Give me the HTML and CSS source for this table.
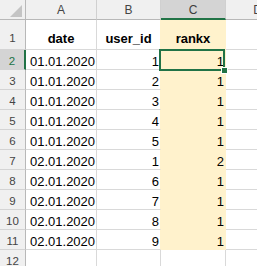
FILE: index.html
```html
<!DOCTYPE html>
<html>
<head>
<meta charset="utf-8">
<link rel="stylesheet" href="styles.css">
</head>
<body>
<div class="sheet">
  <div class="corner"><svg class="tri" width="26" height="20" viewBox="0 0 26 20"><polygon points="22,5 22,17 10,17" fill="#c4c4c4"/></svg></div>
  <div class="ch">A</div><div class="ch">B</div><div class="ch sel">C</div><div class="ch">D</div>

  <div class="rh tall">1</div><div class="c hd">date</div><div class="c hd b">user_id</div><div class="c hd fill">rankx</div><div class="c"></div>

  <div class="rh sel">2</div><div class="c">01.01.2020</div><div class="c num b">1</div><div class="c num fill active">1</div><div class="c"></div>
  <div class="rh">3</div><div class="c">01.01.2020</div><div class="c num b">2</div><div class="c num fill">1</div><div class="c"></div>
  <div class="rh">4</div><div class="c">01.01.2020</div><div class="c num b">3</div><div class="c num fill">1</div><div class="c"></div>
  <div class="rh">5</div><div class="c">01.01.2020</div><div class="c num b">4</div><div class="c num fill">1</div><div class="c"></div>
  <div class="rh">6</div><div class="c">01.01.2020</div><div class="c num b">5</div><div class="c num fill">1</div><div class="c"></div>
  <div class="rh">7</div><div class="c">02.01.2020</div><div class="c num b">1</div><div class="c num fill">2</div><div class="c"></div>
  <div class="rh">8</div><div class="c">02.01.2020</div><div class="c num b">6</div><div class="c num fill">1</div><div class="c"></div>
  <div class="rh">9</div><div class="c">02.01.2020</div><div class="c num b">7</div><div class="c num fill">1</div><div class="c"></div>
  <div class="rh">10</div><div class="c">02.01.2020</div><div class="c num b">8</div><div class="c num fill">1</div><div class="c"></div>
  <div class="rh">11</div><div class="c">02.01.2020</div><div class="c num b">9</div><div class="c num fill">1</div><div class="c"></div>
  <div class="rh">12</div><div class="c"></div><div class="c"></div><div class="c"></div><div class="c"></div>
</div>
</body>
</html>
```

FILE: styles.css
```css
html, body {
  margin: 0;
  padding: 0;
  background: #ffffff;
  overflow: hidden;
}

.sheet {
  display: grid;
  grid-template-columns: 26px 71px 64px 65px 64px;
  grid-template-rows: 20px 30px repeat(11, 20px);
  font-family: "Liberation Sans", Arial, sans-serif;
  font-size: 13px;
  color: #000;
}

.sheet > div {
  box-sizing: border-box;
  border-right: 1px solid #d9d9d9;
  border-bottom: 1px solid #d9d9d9;
  min-width: 0;
  overflow: visible;
  white-space: nowrap;
}

.corner {
  background: #f0f0f0;
  border-right-color: #b8b8b8 !important;
  border-bottom-color: #b8b8b8 !important;
  position: relative;
}

.tri {
  display: block;
}

.ch {
  background: #f0f0f0;
  border-right-color: #d0d0d0 !important;
  border-bottom-color: #b8b8b8 !important;
  display: flex;
  align-items: flex-end;
  justify-content: center;
  font-size: 12px;
  line-height: 15px;
  padding-bottom: 1px;
  color: #444;
}

.ch.sel {
  background: #d4d4d4;
  border-bottom: 2px solid #217346 !important;
  padding-bottom: 0;
  color: #3c3c3c;
}

.rh {
  background: #f0f0f0;
  border-right-color: #b8b8b8 !important;
  border-bottom-color: #d4d4d4 !important;
  display: flex;
  align-items: flex-end;
  justify-content: center;
  font-size: 11.5px;
  line-height: 15px;
  color: #444;
}

.rh.tall {
  padding-bottom: 3px;
}

.rh.sel {
  background: #d4d4d4;
  border-right: 2px solid #217346 !important;
  color: #217346;
}

.c {
  display: flex;
  align-items: flex-end;
  line-height: 15px;
  padding: 0 2px 0 4px;
}

.c.hd {
  justify-content: center;
  font-weight: bold;
  padding: 0 0 3px 0;
}

.c.num {
  justify-content: flex-end;
  padding: 0 1px 0 2px;
}

.c.b {
  border-right-color: #fff2cc;
}

.c.fill {
  background: #fff2cc;
  border-right-color: #fff2cc;
  border-bottom-color: #fff2cc;
}

.c.active {
  position: relative;
  z-index: 1;
}

.c.active::before {
  content: "";
  position: absolute;
  left: -2px;
  right: 0;
  top: -1px;
  bottom: -2px;
  border: 2px solid #217346;
}

.c.active::after {
  content: "";
  position: absolute;
  right: -3px;
  bottom: -5px;
  width: 5px;
  height: 5px;
  background: #217346;
  border: 1px solid #ffffff;
}
```
